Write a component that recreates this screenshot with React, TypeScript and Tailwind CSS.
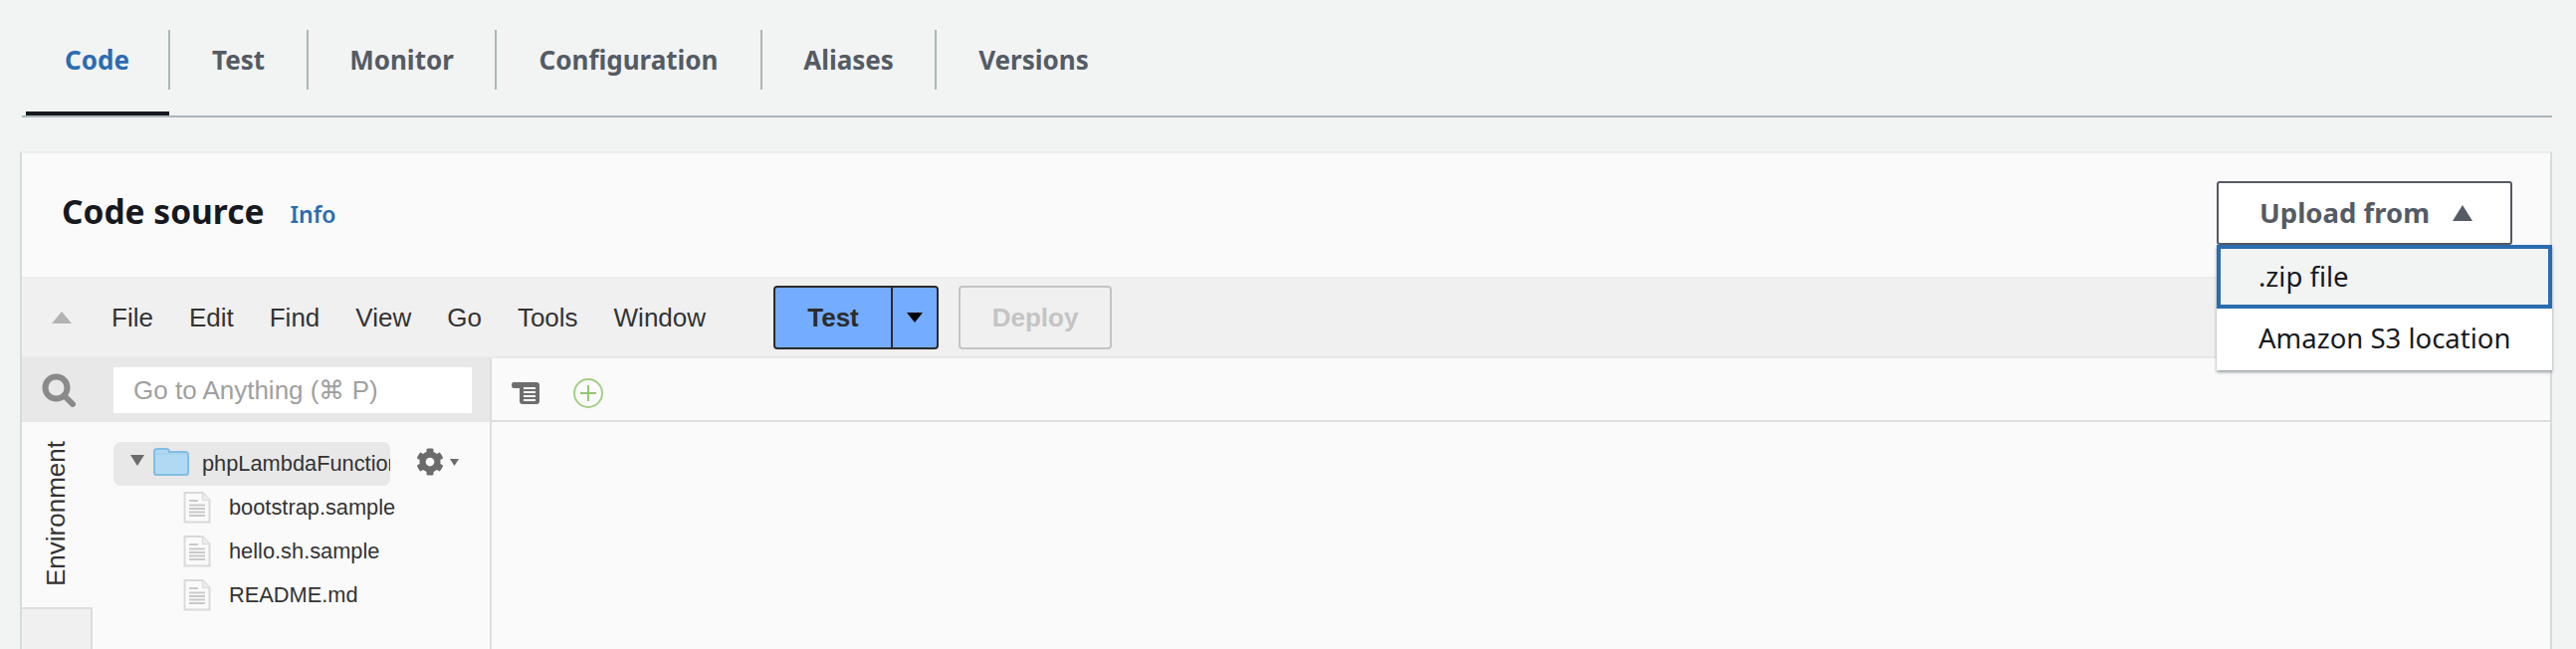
import React from "react";
import { FaCog } from "react-icons/fa";

const noto = "font-['Noto_Sans',sans-serif]";
const lib = "font-['Liberation_Sans',Arial,sans-serif]";

function Tri({ className, up = false }: { className: string; up?: boolean }) {
  return (
    <svg viewBox="0 0 20 12" preserveAspectRatio="none" className={className}>
      <path d={up ? "M10 0 L20 12 L0 12 Z" : "M0 0 L20 0 L10 12 Z"} fill="currentColor" />
    </svg>
  );
}

function FileIcon() {
  return (
    <svg viewBox="0 0 28 32" className="w-[28px] h-[32px] shrink-0">
      <path d="M1.5 1h18l7 7.500v22h-25z" fill="#fafafa" stroke="#d9d9d9" strokeWidth="2" />
      <path d="M19.5 1v7.500h7" fill="#efefef" stroke="#dddddd" strokeWidth="1.500" />
      <path d="M6 9h9M6 13.500h16M6 17h16M6 20.500h16M6 24h16" stroke="#c9c9c9" strokeWidth="2" />
    </svg>
  );
}

function Tab({ label, active, w }: { label: string; active?: boolean; w: string }) {
  return (
    <div className={`relative h-[60px] flex items-center justify-center border-r-2 border-[#aab7b8] last:border-r-0 ${w}`}>
      <span className={`${noto} text-[26px] font-bold ${active ? "text-[#2b6cb0]" : "text-[#545b64]"}`}>{label}</span>
    </div>
  );
}

function FileRow({ name }: { name: string }) {
  return (
    <div className="h-[44px] flex items-center pl-[70px] gap-[18px] whitespace-nowrap">
      <FileIcon />
      <span className={`${lib} text-[21.8px] text-[#333]`}>{name}</span>
    </div>
  );
}

export default function App() {
  return (
    <div className="w-[2588px] h-[652px] overflow-hidden bg-[#f2f3f3] pt-[30px] pl-[22px] pr-[24px]">
      {/* Tabs */}
      <div className="h-[88px] border-b-2 border-[#aab7b8] relative pl-[4px]">
        <div className="flex">
          <Tab label="Code" active w="w-[145px]" />
          <Tab label="Test" w="w-[139px]" />
          <Tab label="Monitor" w="w-[189px]" />
          <Tab label="Configuration" w="w-[267px]" />
          <Tab label="Aliases" w="w-[175px]" />
          <Tab label="Versions" w="w-[195px]" />
        </div>
        <div className="absolute left-[4px] bottom-0 w-[144px] h-[4px] bg-[#16191f]" />
      </div>

      {/* Card */}
      <div className="relative -ml-[2px] mt-[34px] h-[600px] bg-[#fafafa] border-t-2 border-t-[#eaeded] border-l-2 border-r-2 border-[#d5dbdb]">
        {/* Header */}
        <div className="h-[124px] flex justify-between pl-[40px] pr-[38px] pt-[28px]">
          <div className="flex items-center h-[64px] gap-[26px] -mt-[2px]">
            <span className={`${noto} text-[33.5px] font-bold text-[#16191f]`}>Code source</span>
            <span className={`${noto} text-[23px] font-semibold text-[#2b6cb0] mt-[6px]`}>Info</span>
          </div>
          <div className="w-[297px] h-[64px] border-2 border-[#545b64] rounded-[3px] bg-white flex items-center pl-[41px] gap-[23px]">
            <span className={`${noto} text-[27.5px] font-bold text-[#545b64]`}>Upload from</span>
            <Tri up className="w-[20px] h-[16px] text-[#545b64]" />
          </div>
        </div>

        {/* Toolbar */}
        <div className="h-[82px] bg-[#f0f0f0] border-y-2 border-[#e8e8e8] border-t-[#ececec] flex items-center">
          <Tri up className="w-[20px] h-[12px] ml-[30px] text-[#b3b3b3]" />
          <div className={`${lib} text-[26px] text-[#333] flex ml-[40px] gap-[36px] w-[665px]`}>
            <span>File</span>
            <span>Edit</span>
            <span>Find</span>
            <span>View</span>
            <span>Go</span>
            <span>Tools</span>
            <span>Window</span>
          </div>
          <div className="w-[166px] h-[64px] flex bg-[#74adff] border-2 border-[#2b2b2b] rounded-[4px]">
            <div className={`${lib} w-[118px] border-r-2 border-[#2b2b2b] flex items-center justify-center text-[26px] font-bold text-[#2b2b2b]`}>Test</div>
            <div className="flex-1 flex items-center justify-center">
              <Tri className="w-[16px] h-[10px] text-black" />
            </div>
          </div>
          <div className={`${lib} ml-[20px] w-[154px] h-[64px] border-2 border-[#c4c4c4] rounded-[4px] flex items-center justify-center text-[26px] font-bold text-[#c4c4c4]`}>Deploy</div>
        </div>

        {/* Body */}
        <div className="flex h-[400px]">
          <div className="w-[472px] border-r-2 border-[#dddddd] shrink-0">
            <div className="h-[64px] bg-[#e8e8e8] flex items-center">
              <svg viewBox="0 0 34 34" className="w-[34px] h-[34px] ml-[20px]">
                <circle cx="14.500" cy="14.500" r="11" fill="none" stroke="#8a8a8a" strokeWidth="6" />
                <path d="M23 23l8 8" stroke="#8a8a8a" strokeWidth="6" strokeLinecap="round" />
              </svg>
              <div className={`${lib} ml-[38px] w-[360px] h-[46px] bg-white flex items-center pl-[20px] text-[26px] text-[#a0a0a0] whitespace-nowrap`}>
                Go to Anything (⌘ P)
              </div>
            </div>
            <div className="flex h-[336px]">
              <div className="w-[71px] flex flex-col shrink-0">
                <div className="h-[186px] relative">
                  <span className={`${lib} absolute left-[24px] bottom-[21px] text-[26px] text-[#333] [writing-mode:vertical-rl] rotate-180 leading-[20px]`}>
                    Environment
                  </span>
                </div>
                <div className="flex-1 bg-[#f0f0f0] border-t-2 border-r-2 border-[#dddddd]" />
              </div>
              <div className="flex-1 pt-[20px] pl-[21px]">
                <div className="flex items-center">
                  <div className="w-[278px] h-[44px] bg-[#e8e8e8] rounded-[7px] flex items-center pl-[17px] overflow-hidden shrink-0">
                    <Tri className="w-[14px] h-[11px] text-[#6b6b6b] shrink-0 -mt-[8px]" />
                    <svg viewBox="0 0 36 28" className="w-[36px] h-[28px] ml-[9px] shrink-0 -mt-[4px]">
                      <path d="M1 25V4q0-3 3-3h9q3 0 3 3h16q3 0 3 3v18q0 2-2 2H3q-2 0-2-2z" fill="#b0daf3" stroke="#82bde3" strokeWidth="2" />
                      <path d="M1 6h34" stroke="#9fcdea" strokeWidth="1" />
                    </svg>
                    <span className={`${lib} ml-[13px] text-[21.8px] text-[#333] whitespace-nowrap`}>phpLambdaFunction</span>
                  </div>
                  <FaCog className="ml-[26px] w-[28px] h-[28px] text-[#6b6b6b] -mt-[4px]" />
                  <Tri className="ml-[6px] w-[9px] h-[7px] text-[#6b6b6b] -mt-[4px]" />
                </div>
                <FileRow name="bootstrap.sample" />
                <FileRow name="hello.sh.sample" />
                <FileRow name="README.md" />
              </div>
            </div>
          </div>
          <div className="flex-1">
            <div className="h-[64px] border-b-2 border-[#dddddd] flex items-center pl-[20px] gap-[34px] pt-[8px]">
              <svg viewBox="0 0 28 22" className="w-[28px] h-[22px]">
                <path d="M2 0h23q3 0 3 3v16q0 3-3 3H11q-3 0-3-3V6H2Q0 6 0 3t2-3z" fill="#6e6e6e" />
                <path d="M12 6h12M12 10h12M12 14h12M12 18h12" stroke="#fafafa" strokeWidth="2" />
              </svg>
              <svg viewBox="0 0 30 30" className="w-[30px] h-[30px]">
                <circle cx="15" cy="15" r="14" fill="none" stroke="#a2cf85" strokeWidth="2" />
                <path d="M15 7v16M7 15h16" stroke="#93c572" strokeWidth="2" />
              </svg>
            </div>
          </div>
        </div>

        {/* Dropdown menu */}
        <div className={`${noto} absolute top-[92px] left-[2205px] w-[337px] bg-white shadow-[0_2px_3px_rgba(0,28,36,0.4)] text-[27.5px] text-[#16191f]`}>
          <div className="h-[64px] bg-[#f2f3f3] border-[4px] border-[#2b6cb0] flex items-center pl-[38px]">.zip file</div>
          <div className="h-[62px] flex items-center pl-[42px] pb-[2px]">Amazon S3 location</div>
        </div>
      </div>
    </div>
  );
}
